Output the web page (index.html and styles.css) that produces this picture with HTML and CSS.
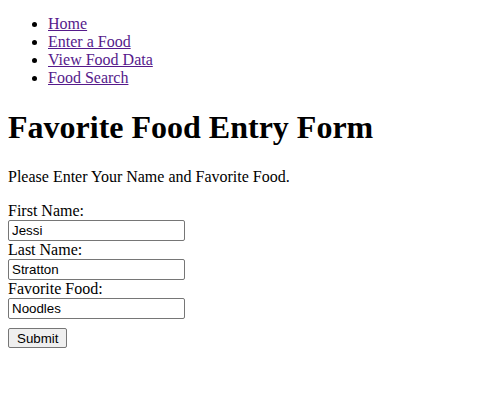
FILE: index.html
```html
<!DOCTYPE html>
<html>
<head>
<meta charset="utf-8">
<link rel="stylesheet" href="styles.css">
</head>
<body>
<ul class="nav">
<li><a href="#">Home</a></li>
<li><a href="#">Enter a Food</a></li>
<li><a href="#">View Food Data</a></li>
<li><a href="#">Food Search</a></li>
</ul>
<h1 class="title">Favorite Food Entry Form</h1>
<p class="intro">Please Enter Your Name and Favorite Food.</p>
<form class="form">
<label>First Name:</label><br>
<input class="field" type="text" value="Jessi"><br>
<label>Last Name:</label><br>
<input class="field" type="text" value="Stratton"><br>
<label>Favorite Food:</label><br>
<input class="field" type="text" value="Noodles"><br>
<div class="actions"><button class="submit" type="button">Submit</button></div>
</form>
</body>
</html>
```
FILE: styles.css
```css
html { background: #fff; }
body {
  margin: 0;
  padding: 0 8px;
  font-family: "Liberation Serif", "Times New Roman", serif;
  font-size: 16px;
  line-height: 18px;
  color: #000;
}
.nav { margin: 15px 0 16px; padding-left: 40px; }
.nav a { color: #551a8b; }
.title { font-size: 32px; line-height: 37px; margin: 22px 0; }
.intro { margin: 16px 0; }
.field {
  font-family: "Liberation Sans", Arial, sans-serif;
  font-size: 13.33px;
  width: 177px;
  height: 21px;
  box-sizing: border-box;
  border: 1px solid #767676;
  border-radius: 2px;
  padding: 1px 3px;
  margin: 0;
  color: #000;
  vertical-align: top;
}
.actions { margin: 9px 0 0; }
.submit {
  font-family: "Liberation Sans", Arial, sans-serif;
  font-size: 13.33px;
  background: #efefef;
  border: 1px solid #767676;
  border-radius: 2px;
  padding: 1px 8px;
  height: 20px;
  color: #000;
}
```
